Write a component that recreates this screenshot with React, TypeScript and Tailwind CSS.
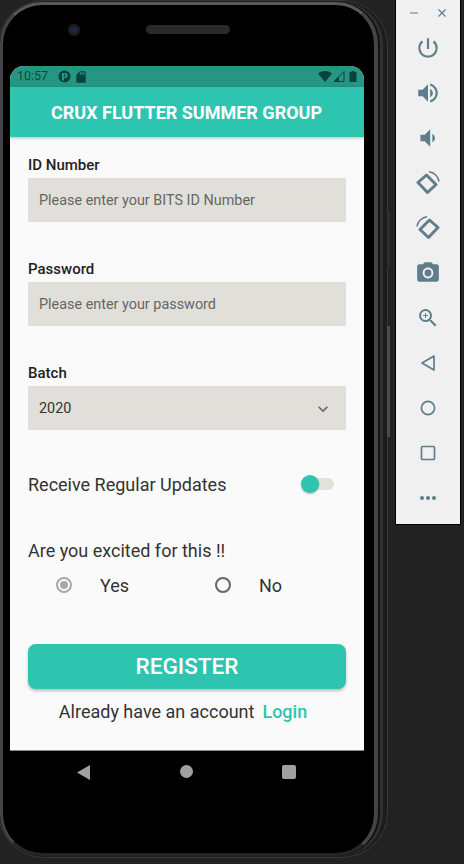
import React from "react";
import { MdPowerSettingsNew, MdVolumeUp, MdVolumeDown, MdPhotoCamera, MdZoomIn, MdSdCard, MdKeyboardArrowDown } from "react-icons/md";

const iconColor = "#5f7d8c";

function RotateIcon({ flip }: { flip?: boolean }) {
  return (
    <svg width="24" height="24" viewBox="0 0 24 24" fill="none" style={flip ? { transform: "scaleX(-1)" } : undefined}>
      <path d="M2 11.500L10.500 4L20 13.500L11.500 21.500z" stroke={iconColor} strokeWidth="3" strokeLinejoin="round" />
      <path d="M13 .8C18 1.300 22.500 5.500 23 10.500" stroke={iconColor} strokeWidth="1.5" />
    </svg>
  );
}

function Tool({ children }: { children: React.ReactNode }) {
  return <div className="flex h-[45px] items-center justify-center">{children}</div>;
}

function SidePanel() {
  return (
    <div className="ml-[7px] h-[525px] w-[66px] shrink-0 border border-t-0 border-black bg-[#f0f0f0]">
      <div className="flex h-[25px] items-center justify-between px-[14px] pt-[1px]">
        <svg width="8" height="8" viewBox="0 0 8 8"><path d="M0 4h8" stroke={iconColor} strokeWidth="1" /></svg>
        <svg width="8" height="8" viewBox="0 0 8 8"><path d="M.5.500l7 7M7.500.500l-7 7" stroke={iconColor} strokeWidth="1.2" /></svg>
      </div>
      <Tool><MdPowerSettingsNew size={26} color={iconColor} /></Tool>
      <Tool><MdVolumeUp size={26} color={iconColor} /></Tool>
      <Tool><MdVolumeDown size={26} color={iconColor} /></Tool>
      <Tool><RotateIcon /></Tool>
      <Tool><RotateIcon flip /></Tool>
      <Tool><MdPhotoCamera size={26} color={iconColor} /></Tool>
      <Tool><MdZoomIn size={24} color={iconColor} /></Tool>
      <Tool>
        <svg width="16" height="18" viewBox="0 0 16 18" fill="none"><path d="M14 2L2 9l12 7z" stroke={iconColor} strokeWidth="1.7" strokeLinejoin="round" /></svg>
      </Tool>
      <Tool>
        <svg width="16" height="16" viewBox="0 0 16 16" fill="none"><circle cx="8" cy="8" r="6.600" stroke={iconColor} strokeWidth="1.7" /></svg>
      </Tool>
      <Tool>
        <svg width="16" height="16" viewBox="0 0 16 16" fill="none"><rect x="1.500" y="1.500" width="13" height="13" rx="1" stroke={iconColor} strokeWidth="1.7" /></svg>
      </Tool>
      <Tool>
        <svg width="18" height="6" viewBox="0 0 18 6" fill={iconColor}><circle cx="3" cy="3" r="2" /><circle cx="9" cy="3" r="2" /><circle cx="15" cy="3" r="2" /></svg>
      </Tool>
    </div>
  );
}

function StatusBar() {
  return (
    <div className="flex h-[21px] shrink-0 items-center justify-between bg-[#259682] pl-[7px] pr-[7px] text-[#0c4a40]">
      <div className="flex items-center">
        <span className="text-[12.5px] leading-none">10:57</span>
        <svg className="ml-[10px]" width="13" height="13" viewBox="0 0 13 13">
          <circle cx="6.500" cy="6.500" r="6" fill="#0a4339" />
          <path d="M4 3h3.200a2.400 2.400 0 0 1 0 5H6v2.500H4z" fill="#259682" />
          <path d="M6 4.200h1v2.600H6z" fill="#0a4339" />
        </svg>
        <MdSdCard className="ml-[3px]" size={14} color="#0a4339" />
      </div>
      <div className="flex items-center gap-[1px]">
        <svg width="14" height="11" viewBox="0 0 14 11"><path d="M0 2.500C4 -.8 10 -.8 14 2.500L7 11z" fill="#0a4339" /></svg>
        <svg width="12" height="11" viewBox="0 0 12 11"><path d="M11 .5V10.500H1z" fill="none" stroke="#0a4339" strokeWidth="1" /><path d="M6 5.500V10.500H1z" fill="#0a4339" /></svg>
        <svg className="ml-[3px]" width="8" height="11" viewBox="0 0 8 11"><path d="M2.500 0h3v1H7.500v10H.5V1h2z" fill="#0a4339" /></svg>
      </div>
    </div>
  );
}

function Label({ children }: { children: React.ReactNode }) {
  return <div className="mb-[5px] h-[16px] text-[15px] font-medium leading-[16px] text-[#222]">{children}</div>;
}

function Input({ children }: { children: React.ReactNode }) {
  return (
    <div className="flex h-[44px] items-center bg-[#e0dfda] pl-[11px] pt-[1px] text-[14.4px] text-[#666]">{children}</div>
  );
}

function Radio({ on }: { on?: boolean }) {
  return (
    <span className={on ? "flex h-[16px] w-[16px] items-center justify-center rounded-full border-2 border-[#a8a8a8]" : "flex h-[16px] w-[16px] items-center justify-center rounded-full border-2 border-[#666]"}>
      {on && <span className="h-[8px] w-[8px] rounded-full bg-[#a8a8a8]" />}
    </span>
  );
}

function Screen() {
  return (
    <div className="flex h-[685px] w-[354px] flex-col overflow-hidden rounded-t-[14px] border-b border-b-[#888] bg-[#fafafa]">
      <StatusBar />
      <div className="flex h-[50px] shrink-0 items-center justify-center bg-[#2dc5b0] pr-[1px] text-[18px] font-bold text-white shadow-[0_1px_3px_rgba(0,0,0,0.25)]">
        CRUX FLUTTER SUMMER GROUP
      </div>
      <div className="flex flex-col px-[18px] pt-[20px]">
        <Label>ID Number</Label>
        <Input>Please enter your BITS ID Number</Input>
        <div className="h-[39px]" />
        <Label>Password</Label>
        <Input>Please enter your password</Input>
        <div className="h-[39px]" />
        <Label>Batch</Label>
        <div className="flex h-[44px] items-center justify-between bg-[#e0dfda] pl-[11px] pr-[13px] pt-[1px] text-[14.4px] text-[#333]">
          2020
          <MdKeyboardArrowDown size={20} color="#666" />
        </div>
        <div className="mt-[41px] flex h-[26px] items-center justify-between pr-[12px]">
          <span className="text-[18px] text-[#333]">Receive Regular Updates</span>
          <div className="relative h-[12px] w-[29px] rounded-full bg-[#e2e1dc]">
            <span className="absolute left-[-4px] top-[-3px] h-[18px] w-[18px] rounded-full bg-[#2dc5b0] shadow-[0_1px_2px_rgba(0,0,0,0.3)]" />
          </div>
        </div>
        <div className="mt-[42px] h-[24px] text-[18px] leading-[24px] text-[#333]">Are you excited for this !!</div>
        <div className="mt-[10px] flex h-[24px] items-center pl-[28px] text-[18px] text-[#333]">
          <Radio on />
          <span className="ml-[28px] w-[115px]">Yes</span>
          <Radio />
          <span className="ml-[28px]">No</span>
        </div>
        <div className="mt-[47px] flex h-[45px] items-center justify-center rounded-[8px] bg-[#2dc5b0] text-[22.5px] font-medium text-white shadow-[0_2px_3px_rgba(0,0,0,0.25)]">
          REGISTER
        </div>
        <div className="mt-[10px] flex h-[24px] items-center justify-center pr-[8px] text-[18px] text-[#333]">
          Already have an account
          <span className="ml-[8px] font-medium text-[#2dc5b0]">Login</span>
        </div>
      </div>
    </div>
  );
}

function Phone() {
  return (
    <div className="relative ml-[-2px] h-[858px] w-[390px] shrink-0 rounded-[46px] border border-[#383838] bg-[#1c1c1c] pb-[1px] pl-[1px] pr-[9px] pt-[1px]">
      <span className="absolute left-[388px] top-[211px] h-[55px] w-[3px] bg-[#2e2e2e]" />
      <span className="absolute left-[388px] top-[325px] h-[111px] w-[3px] bg-[#4c4c4c]" />
      <div className="h-full w-full rounded-[42px] border-[3px] border-b-[#262626] border-l-[#444448] border-r-[4px] border-r-[#444446] border-t-[#58585c] bg-black shadow-[2px_0_0_0_#111111,5px_0_0_0_#303030]">
        <div className="relative h-full w-full">
          <div className="absolute left-[65px] top-[19px] flex h-[12px] w-[12px] items-center justify-center rounded-full bg-[#1e1e22]">
            <span className="h-[6px] w-[6px] rounded-full bg-[#1c2850]" />
          </div>
          <div className="absolute left-[143px] top-[20px] h-[9px] w-[84px] rounded-full bg-[#2a2a2a]" />
          <div className="h-[61px]" />
          <div className="pl-[7px]">
            <Screen />
          </div>
          <div className="relative ml-[7px] h-[40px] w-[354px]">
            <svg className="absolute left-[67px] top-[14px]" width="13" height="15" viewBox="0 0 13 15"><path d="M13 0v15L0 7.500z" fill="#a0a0a0" /></svg>
            <span className="absolute left-[170px] top-[14px] h-[13px] w-[13px] rounded-full bg-[#a0a0a0]" />
            <span className="absolute left-[272px] top-[14px] h-[14px] w-[14px] rounded-[2px] bg-[#a0a0a0]" />
          </div>
        </div>
      </div>
    </div>
  );
}

export default function App() {
  return (
    <div className="flex h-[864px] w-[464px] overflow-hidden bg-[#222222] font-['Roboto',sans-serif]">
      <Phone />
      <SidePanel />
    </div>
  );
}
